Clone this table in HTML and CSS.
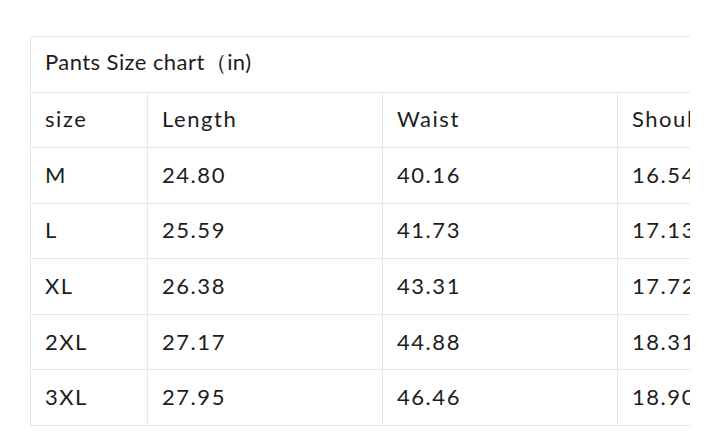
FILE: index.html
```html
<!DOCTYPE html>
<html>
<head>
<meta charset="utf-8">
<link rel="stylesheet" href="styles.css">
</head>
<body>
<div class="page">
  <div class="scroller">
    <table class="chart">
      <colgroup>
        <col class="c1"><col class="c2"><col class="c3"><col class="c4"><col class="c5">
      </colgroup>
      <tr><th class="caption" colspan="5">Pants Size chart（in)</th></tr>
      <tr><td>size</td><td>Length</td><td>Waist</td><td>Shoulder</td><td>Hip</td></tr>
      <tr><td>M</td><td>24.80</td><td>40.16</td><td>16.54</td><td>40.94</td></tr>
      <tr><td>L</td><td>25.59</td><td>41.73</td><td>17.13</td><td>42.52</td></tr>
      <tr><td>XL</td><td>26.38</td><td>43.31</td><td>17.72</td><td>44.09</td></tr>
      <tr><td>2XL</td><td>27.17</td><td>44.88</td><td>18.31</td><td>45.67</td></tr>
      <tr><td>3XL</td><td>27.95</td><td>46.46</td><td>18.90</td><td>47.24</td></tr>
    </table>
  </div>
</div>
</body>
</html>
```
FILE: styles.css
```css
html, body { margin: 0; padding: 0; background: #fff; }
.page { padding: 36px 30px 0 30px; }
.scroller { width: 660px; overflow: hidden; }
.chart {
  border-collapse: collapse;
  font-family: Lato, "Noto Sans", sans-serif;
  font-size: 22px;
  letter-spacing: 0.07em;
  color: #1c1d1d;
  table-layout: fixed;
  width: 940px;
}
.chart th, .chart td {
  border: 1px solid #e8e8e1;
  padding: 0 14px 2px 14px;
  height: 55.57px;
  box-sizing: border-box;
  text-align: left;
  font-weight: 400;
  white-space: nowrap;
  overflow: hidden;
  vertical-align: middle;
}
.chart .caption { letter-spacing: 0.02em; }
.c1 { width: 117px; }
.c2 { width: 235px; }
.c3 { width: 235px; }
.c4 { width: 235px; }
.c5 { width: 118px; }
```
